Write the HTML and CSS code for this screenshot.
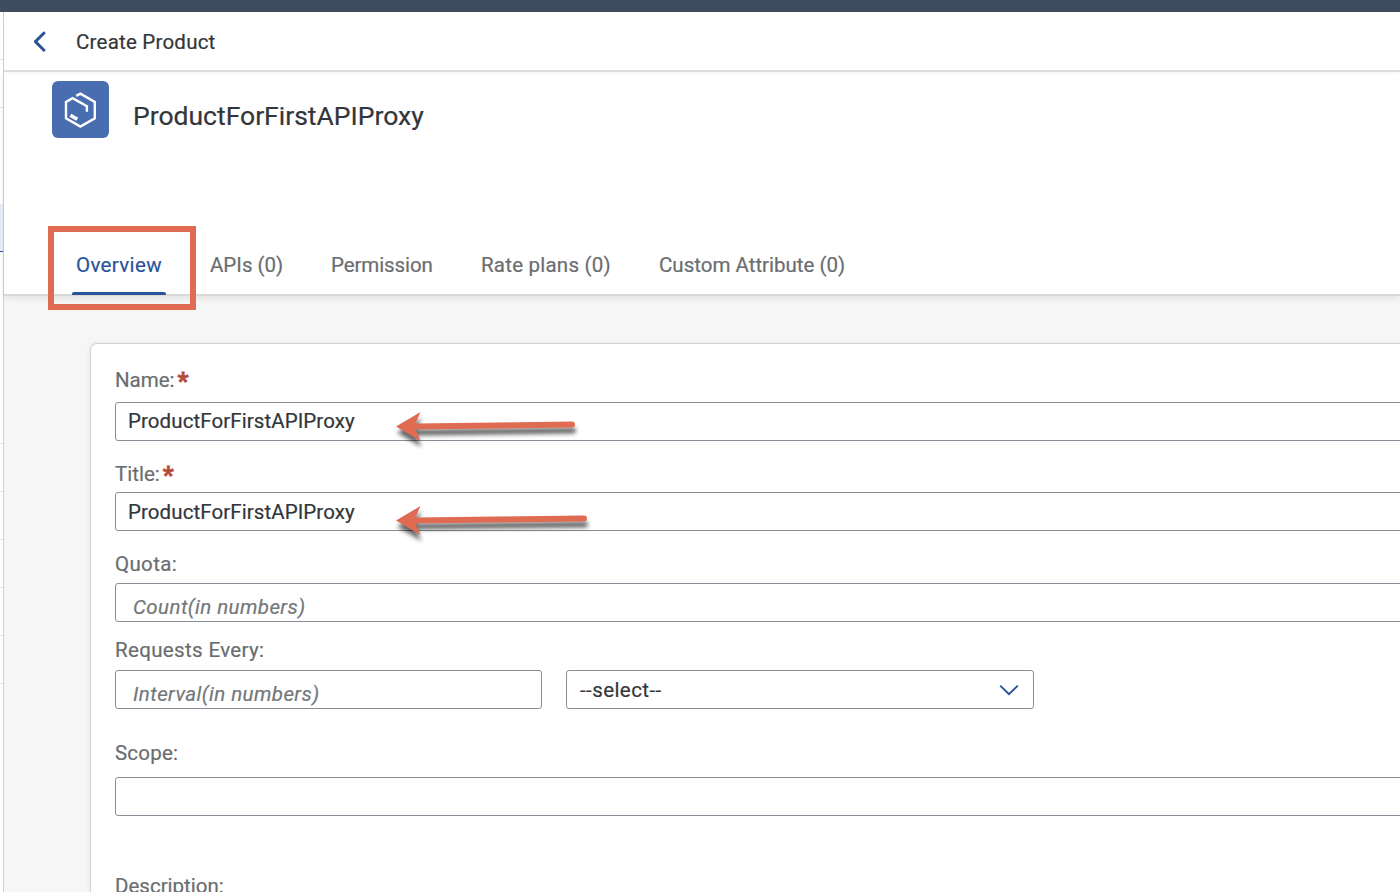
FILE: index.html
```html
<!DOCTYPE html>
<html lang="en">
<head>
<meta charset="utf-8">
<title>Create Product</title>
<link rel="stylesheet" href="styles.css">
</head>
<body>
<div class="shell-bar"></div>
<div class="shell">
  <aside class="rail">
    <div class="rail-row"></div>
    <div class="rail-row"></div>
    <div class="rail-gap rail-gap-small"></div>
    <div class="rail-row rail-selected"></div>
    <div class="rail-gap rail-gap-large"></div>
    <div class="rail-row"></div>
    <div class="rail-row"></div>
    <div class="rail-row"></div>
    <div class="rail-row"></div>
    <div class="rail-row"></div>
    <div class="rail-row"></div>
  </aside>
  <main class="page">
    <header class="page-bar">
      <svg class="back" width="14" height="22" viewBox="0 0 14 22"><path d="M12.8 1.2 3.4 10.6l9.4 9.4" fill="none" stroke="#2a539c" stroke-width="2.9" stroke-linecap="butt" stroke-linejoin="round"/></svg>
      <span class="page-bar-title">Create Product</span>
    </header>
    <section class="object-header">
      <div class="object-row">
        <div class="avatar">
          <svg width="57" height="57" viewBox="0 0 57 57" fill="none" stroke="#fff" stroke-width="2.4"><path d="M24.2 14.9 28.4 12.7 42.8 20.9V37.3L28.4 45.6 14 37.3V20.9L20.6 17.1 34.9 25.1V30.8"/><path d="M18.4 34.3 25.3 38.3" stroke-width="3.6"/></svg>
        </div>
        <h1 class="object-title">ProductForFirstAPIProxy</h1>
      </div>
      <nav class="tabs">
        <a class="tab tab-overview">Overview<i class="tab-underline"></i><i class="highlight"></i></a>
        <a class="tab tab-apis">APIs (0)</a>
        <a class="tab tab-permission">Permission</a>
        <a class="tab tab-rates">Rate plans (0)</a>
        <a class="tab tab-custom">Custom Attribute (0)</a>
      </nav>
    </section>
    <section class="content">
      <form class="card">
        <div class="field field-name">
          <label class="label"><span class="l-name">Name:</span><b class="required">*</b></label>
          <div class="input"><span class="value">ProductForFirstAPIProxy</span>
            <svg class="arrow" width="200" height="50" viewBox="0 0 200 50"><path class="arrow-shape" d="M6 20.5 30.5 6 25.5 17.5 182 15.5A3 3 0 0 1 182 21.5L25.5 23.5 30.5 35Z"/></svg>
          </div>
        </div>
        <div class="field field-title">
          <label class="label"><span class="l-title">Title:</span><b class="required">*</b></label>
          <div class="input"><span class="value">ProductForFirstAPIProxy</span>
            <svg class="arrow arrow-title" width="212" height="50" viewBox="0 0 212 50"><path class="arrow-shape" d="M6 20.5 30.5 6 25.5 17.5 194 15.5A3 3 0 0 1 194 21.5L25.5 23.5 30.5 35Z"/></svg>
          </div>
        </div>
        <div class="field field-quota">
          <label class="label l-quota">Quota:</label>
          <div class="input"><span class="placeholder">Count(in numbers)</span></div>
        </div>
        <div class="field field-requests">
          <label class="label l-requests">Requests Every:</label>
          <div class="input-row">
            <div class="input input-interval"><span class="placeholder">Interval(in numbers)</span></div>
            <div class="input select"><span class="value v-select">--select--</span>
              <svg width="20" height="12" viewBox="0 0 20 12"><path d="M1.2 1.6 10 10.2 18.8 1.6" fill="none" stroke="#2a539c" stroke-width="2"/></svg>
            </div>
          </div>
        </div>
        <div class="field field-scope">
          <label class="label l-scope">Scope:</label>
          <div class="input"></div>
        </div>
        <div class="field">
          <label class="label l-description">Description:</label>
        </div>
      </form>
    </section>
  </main>
</div>
</body>
</html>
```
FILE: styles.css
```css
* { box-sizing: border-box; }
body {
  margin: 0;
  width: 1400px;
  height: 892px;
  overflow: hidden;
  display: flex;
  flex-direction: column;
  background: #fff;
  color: #32363a;
  font: 20.5px/24px Roboto, sans-serif;
  -webkit-text-stroke: .2px;
}
.shell-bar { height: 12px; flex: none; background: #3f4b5e; }
.shell { display: flex; height: 880px; }

.rail { width: 4px; flex: none; border-right: 1px solid #cfcfcf; }
.rail-row { height: 48px; border-bottom: 1px solid #e2e2e2; }
.rail-gap-small { height: 96px; }
.rail-selected { background: #e6eff8; border-bottom-color: #2a539c; }
.rail-gap-large { height: 144px; }

.page { flex: 1; min-width: 0; display: flex; flex-direction: column; }
.page-bar {
  height: 60px;
  flex: none;
  display: flex;
  align-items: center;
  padding: 2px 0 0 28px;
  border-bottom: 2px solid #dedede;
  box-shadow: 0 2px 4px rgba(0, 0, 0, .03);
}
.back { margin-right: 30px; }
.page-bar-title { letter-spacing: .22px; }

.object-header {
  height: 224px;
  flex: none;
  display: flex;
  flex-direction: column;
  justify-content: space-between;
  padding: 9px 0 0 48px;
  border-bottom: 2px solid #d9d9d9;
  box-shadow: 0 3px 6px rgba(0, 0, 0, .07);
  position: relative;
}
.object-row { display: flex; gap: 24px; }
.avatar { width: 57px; height: 57px; border-radius: 6px; background: #496eb0; }
.avatar svg { display: block; }
.object-title { margin: 19px 0 0; font-size: 26.5px; line-height: 32px; font-weight: 400; }

.tabs { display: flex; height: 61px; padding-left: 24px; color: #6a6d70; }
.tab { position: relative; height: 61px; padding-top: 20px; white-space: nowrap; }
.tab-overview { width: 134px; color: #2a539c; letter-spacing: .35px; }
.tab-apis { width: 121px; }
.tab-permission { width: 150px; letter-spacing: -.1px; }
.tab-rates { width: 178px; letter-spacing: .22px; }
.tab-underline {
  position: absolute;
  left: -4px;
  bottom: -1px;
  width: 94px;
  height: 3px;
  border-radius: 2px 2px 0 0;
  background: #2a539c;
}
.highlight {
  position: absolute;
  left: -28px;
  top: -7px;
  width: 148px;
  height: 84px;
  border: 6px solid #df6b52;
}

.content { flex: 1; min-height: 0; background: #f6f6f6; padding: 47px 0 0 86px; overflow: hidden; }
.card {
  width: 1400px;
  height: 700px;
  padding: 24px;
  border: 1px solid #d2d2d2;
  border-radius: 7px;
  background: #fff;
  box-shadow: 0 0 5px rgba(0, 0, 0, .08);
}
.label { display: flex; height: 24px; color: #6a6d70; }
.required { margin-left: 3px; color: #b64b3d; font-size: 24px; line-height: 27px; -webkit-text-stroke: .8px; }
.l-quota { letter-spacing: .35px; }
.l-requests { letter-spacing: .35px; }
.l-scope { letter-spacing: .2px; }
.input {
  position: relative;
  height: 39px;
  display: flex;
  align-items: center;
  padding: 0 12px 2px;
  border: 1px solid #8b8c98;
  border-radius: 3px;
  background: #fff;
}
.value { letter-spacing: .08px; }
.input-row { display: flex; gap: 24px; }
.input-interval { width: 427px; }
.select { width: 468px; justify-content: space-between; padding: 0 14px 0 13px; }
.v-select { margin-top: 1px; letter-spacing: .42px; }
.field-name { margin-bottom: 21px; }
.field-name .input { margin-top: 10px; }
.field-title { margin-bottom: 21px; }
.field-title .input { margin-top: 6px; padding-bottom: 0; }
.field-quota { margin-bottom: 16px; }
.field-quota .input { margin-top: 7px; }
.field-requests { margin-bottom: 32px; }
.field-requests .input-row { margin-top: 8px; }
.field-scope { margin-bottom: 58px; }
.field-scope .input { margin-top: 12px; }
.placeholder { font-style: italic; color: #74777a; padding: 10px 0 0 5px; letter-spacing: .42px; }

.arrow { position: absolute; left: 274px; top: 3px; overflow: visible; filter: drop-shadow(1px 6px 2px rgba(0, 0, 0, .6)); }
.arrow-title { top: 7px; }
.arrow-shape { fill: #df6b52; }
```
